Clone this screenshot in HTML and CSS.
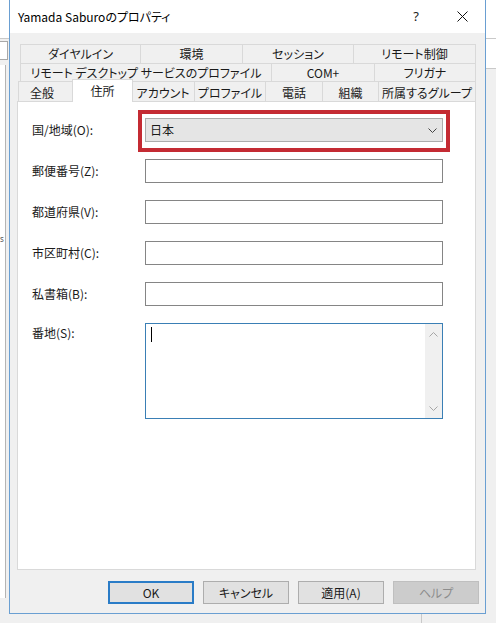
FILE: index.html
```html
<!DOCTYPE html>
<html lang="ja">
<head>
<meta charset="utf-8">
<title>Yamada Saburoのプロパティ</title>
<link rel="stylesheet" href="styles.css">
</head>
<body>
<div class="desktop">
  <div class="bg-top"></div>
  <div class="bg-box1"></div>
  <div class="bg-box2"><span class="bg-char">s</span></div>
  <div class="bg-right"></div>
  <div class="bg-line"></div>

  <div class="dialog">
    <div class="titlebar">
      <span class="title">Yamada Saburoのプロパティ</span>
      <div class="tb-buttons">
        <span class="tb-btn help">?</span>
        <span class="tb-btn">
          <svg width="11" height="11" viewBox="0 0 11 11"><path d="M0.5 0.5 L10.5 10.5 M10.5 0.5 L0.5 10.5" stroke="#111" stroke-width="1" fill="none"/></svg>
        </span>
      </div>
    </div>

    <div class="body">
      <div class="tabs">
        <div class="tabrow row1">
          <div class="tab t120">ダイヤルイン</div>
          <div class="tab t102">環境</div>
          <div class="tab t111">セッション</div>
          <div class="tab t123 last">リモート制御</div>
        </div>
        <div class="tabrow row2">
          <div class="tab t251">リモート デスクトップ サービスのプロファイル</div>
          <div class="tab t103">COM+</div>
          <div class="tab t102 last">フリガナ</div>
        </div>
        <div class="tabrow row3">
          <div class="tab t55">全般</div>
          <div class="tab t59 sel">住所</div>
          <div class="tab t62">アカウント</div>
          <div class="tab t71">プロファイル</div>
          <div class="tab t57">電話</div>
          <div class="tab t56">組織</div>
          <div class="tab t98 last">所属するグループ</div>
        </div>
      </div>

      <div class="panel">
        <div class="form">
          <label class="lbl">国/地域(O):</label>
          <div class="select-wrap">
            <div class="select">
              <span>日本</span>
              <svg class="chev" width="9" height="5" viewBox="0 0 9 5"><path d="M0.5 0.5 L4.5 4.5 L8.5 0.5" stroke="#444" stroke-width="1" fill="none"/></svg>
            </div>
          </div>

          <label class="lbl">郵便番号(Z):</label>
          <div class="input"></div>

          <label class="lbl">都道府県(V):</label>
          <div class="input"></div>

          <label class="lbl">市区町村(C):</label>
          <div class="input"></div>

          <label class="lbl">私書箱(B):</label>
          <div class="input"></div>

          <label class="lbl top">番地(S):</label>
          <div class="textarea">
            <span class="caret"></span>
            <div class="vscroll">
              <svg width="9" height="5" viewBox="0 0 9 5"><path d="M0.5 4.5 L4.5 0.5 L8.5 4.5" stroke="#a6a6a6" stroke-width="1" fill="none"/></svg>
              <svg width="9" height="5" viewBox="0 0 9 5"><path d="M0.5 0.5 L4.5 4.5 L8.5 0.5" stroke="#a6a6a6" stroke-width="1" fill="none"/></svg>
            </div>
          </div>
        </div>
      </div>

      <div class="buttons">
        <div class="btn default">OK</div>
        <div class="btn">キャンセル</div>
        <div class="btn">適用(A)</div>
        <div class="btn disabled">ヘルプ</div>
      </div>
    </div>
  </div>
</div>
</body>
</html>
```

FILE: styles.css
```css
* { box-sizing: border-box; margin: 0; padding: 0; }

html, body {
  width: 496px;
  height: 623px;
  overflow: hidden;
}

body {
  font-family: "Noto Sans CJK JP", "Noto Sans", sans-serif;
  font-size: 12px;
  line-height: 16px;
  color: #1a1a1a;
  font-feature-settings: "palt";
  background: #f0f0f0;
}

.desktop {
  position: relative;
  width: 496px;
  height: 623px;
  background: #f0f0f0;
  overflow: hidden;
}

/* background window behind the dialog */
.bg-top {
  position: absolute;
  left: 0; top: 0;
  width: 496px; height: 39px;
  background: #fff;
  border-bottom: 1px solid #c9c9c9;
}
.bg-box1 {
  position: absolute;
  left: 0; top: 41px;
  width: 8px; height: 19px;
  background: #fff;
  border: 1px solid #a8a8a8;
  border-left: none;
}
.bg-box2 {
  position: absolute;
  left: 0; top: 65px;
  width: 6px; height: 533px;
  background: #fff;
  border-right: 1px solid #b4b4b4;
}
.bg-char {
  position: absolute;
  left: 0; top: 169px;
  font-family: "Noto Sans", sans-serif;
  font-size: 8px;
  line-height: 10px;
  color: #555;
}
.bg-right {
  position: absolute;
  right: 0; top: 39px;
  width: 11px; height: 30px;
  background: #fff;
  border-bottom: 1px solid #c9c9c9;
}
.bg-line {
  position: absolute;
  left: 421px; top: 614px;
  width: 1px; height: 9px;
  background: #c9c9c9;
}

/* dialog window */
.dialog {
  position: absolute;
  left: 9px; top: 0;
  width: 477px; height: 614px;
  border: 1px solid #6a9fd2;
  border-top: none;
  background: #f0f0f0;
  display: flex;
  flex-direction: column;
}

.titlebar {
  height: 33px;
  background: #fff;
  display: flex;
  align-items: center;
  padding-left: 8px;
  flex: none;
}
.title { color: #000; }
.tb-buttons {
  margin-left: auto;
  display: flex;
  height: 33px;
}
.tb-btn {
  width: 46px;
  height: 33px;
  display: flex;
  align-items: center;
  justify-content: center;
}
.tb-btn.help {
  font-family: "Noto Sans", sans-serif;
  font-size: 13px;
  padding-bottom: 1px;
}

.body {
  flex: 1;
  display: flex;
  flex-direction: column;
  padding-top: 11px;
}

/* tabs */
.tabs { display: flex; flex-direction: column; }
.tabrow { display: flex; }
.row1 { margin-left: 10px; height: 19px; }
.row2 { margin-left: 10px; height: 18px; }
.row3 { margin-left: 8px; height: 20px; position: relative; z-index: 2; }

.tab {
  flex: none;
  background: #f0f0f0;
  border-top: 1px solid #d9d9d9;
  border-left: 1px solid #d9d9d9;
  display: flex;
  align-items: center;
  justify-content: center;
  white-space: nowrap;
}
.tab.last { border-right: 1px solid #d9d9d9; }
.row3 .tab { padding-top: 2px; }
.row3 .tab.sel {
  background: #fff;
  border: 1px solid #d9d9d9;
  border-bottom: none;
  height: 23px;
  margin: -2px -1px -1px -1px;
  padding-top: 0;
  padding-bottom: 1px;
  position: relative;
  z-index: 3;
}
.row3 .tab.sel + .tab { border-left: none; }
.row3 .tab.t55 { padding-right: 8px; }

.t55 { width: 55px; }
.t56 { width: 56px; }
.t57 { width: 57px; }
.t59 { width: 59px; }
.row3 .tab.sel.t59 { width: 61px; }
.t62 { width: 62px; }
.t71 { width: 71px; }
.t98 { width: 98px; }
.t102 { width: 102px; }
.t103 { width: 103px; }
.t111 { width: 111px; }
.t120 { width: 120px; }
.t123 { width: 123px; }
.t251 { width: 251px; }

/* panel */
.panel {
  margin-left: 7px;
  width: 459px;
  height: 469px;
  background: #fff;
  border: 1px solid #d9d9d9;
  padding: 16px 0 0 14px;
  flex: none;
  position: relative;
  z-index: 1;
}

.form {
  display: grid;
  grid-template-columns: 113px 298px;
  row-gap: 17px;
  align-items: center;
}
.lbl { white-space: nowrap; }
.lbl.top { align-self: start; margin-top: 2px; }

.select-wrap { position: relative; }
.select-wrap::after {
  content: "";
  position: absolute;
  left: -7px; right: -7px;
  top: -8px; bottom: -10px;
  border: 4px solid #c42b33;
  pointer-events: none;
}
.select {
  height: 24px;
  background: #e5e5e5;
  border: 1px solid #acacac;
  display: flex;
  align-items: center;
  padding-left: 4px;
  padding-right: 5px;
}
.chev { margin-left: auto; }

.input {
  height: 24px;
  background: #fff;
  border: 1px solid #858585;
}

.textarea {
  height: 96px;
  background: #fff;
  border: 1px solid #3a7fb5;
  display: flex;
  position: relative;
}
.caret {
  width: 1px;
  height: 15px;
  background: #000;
  margin: 3px 0 0 5px;
}
.vscroll {
  margin-left: auto;
  width: 17px;
  background: #f0f0f0;
  display: flex;
  flex-direction: column;
  align-items: center;
  justify-content: space-between;
  padding: 8px 0 7px 0;
}

/* buttons */
.buttons {
  display: flex;
  justify-content: flex-end;
  gap: 9px;
  margin-top: 11px;
  padding-right: 6px;
}
.btn {
  width: 86px;
  height: 23px;
  background: #e1e1e1;
  border: 1px solid #adadad;
  display: flex;
  align-items: center;
  justify-content: center;
  white-space: nowrap;
}
.btn.default { border: 2px solid #2a7cc7; }
.btn.disabled {
  background: #cccccc;
  border-color: #bfbfbf;
  color: #8d8d8d;
}
```
